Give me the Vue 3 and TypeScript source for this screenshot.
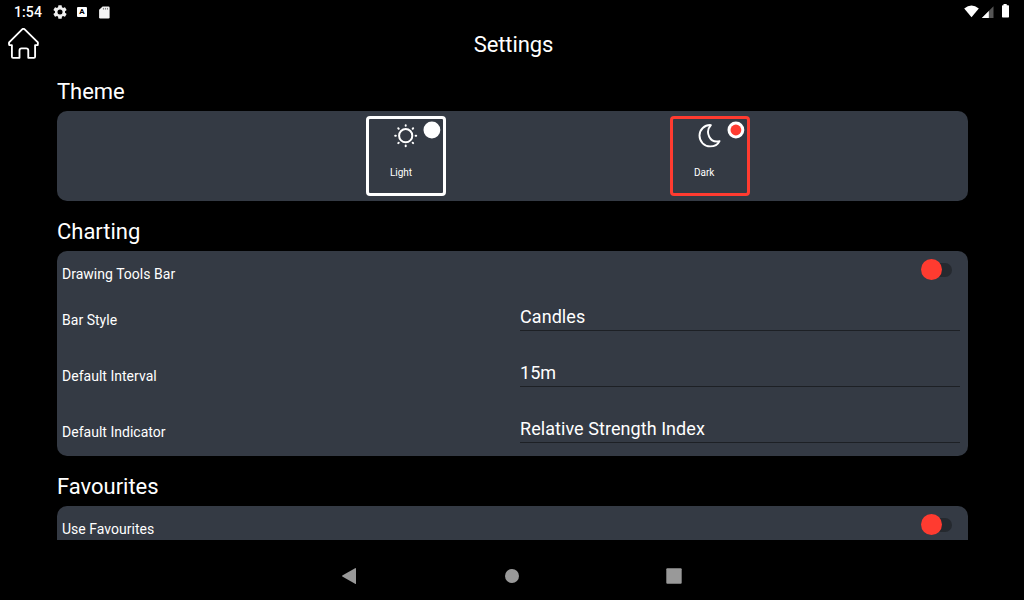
<script setup lang="ts">
import { ref } from 'vue'

type Theme = 'light' | 'dark'

interface Choice {
  label: string
  value: string
}

const theme = ref<Theme>('dark')
const drawingTools = ref(false)
const useFavourites = ref(false)

const themes: { id: Theme; label: string }[] = [
  { id: 'light', label: 'Light' },
  { id: 'dark', label: 'Dark' },
]

const choices: Choice[] = [
  { label: 'Bar Style', value: 'Candles' },
  { label: 'Default Interval', value: '15m' },
  { label: 'Default Indicator', value: 'Relative Strength Index' },
]

const rays = [0, 45, 90, 135, 180, 225, 270, 315]
</script>

<template>
  <div class="screen">
    <div class="status">
      <span class="clock">1:54</span>
      <svg class="gear" width="14" height="14" viewBox="2 2 20 20">
        <path fill="#eee" d="M19.14 12.94c.04-.3.06-.61.06-.94s-.02-.64-.07-.94l2.03-1.58a.49.49 0 0 0 .12-.61l-1.92-3.32a.49.49 0 0 0-.59-.22l-2.39.96a7 7 0 0 0-1.62-.94l-.36-2.54a.48.48 0 0 0-.48-.41h-3.84a.47.47 0 0 0-.47.41l-.36 2.54c-.59.24-1.13.57-1.62.94l-2.39-.96a.47.47 0 0 0-.59.22L2.74 8.87a.47.47 0 0 0 .12.61l2.03 1.58c-.05.3-.09.63-.09.94s.02.64.07.94l-2.03 1.58a.49.49 0 0 0-.12.61l1.92 3.32c.12.22.37.29.59.22l2.39-.96c.5.38 1.03.7 1.62.94l.36 2.54c.05.24.24.41.48.41h3.84c.24 0 .44-.17.47-.41l.36-2.54a7 7 0 0 0 1.62-.94l2.39.96c.22.08.47 0 .59-.22l1.92-3.32a.47.47 0 0 0-.12-.61zM12 15.6a3.6 3.6 0 1 1 0-7.2 3.6 3.6 0 0 1 0 7.2z" />
      </svg>
      <span class="badge">A</span>
      <svg class="card-icon" width="11" height="13" viewBox="0 0 11 13">
        <path fill="#f4f4f4" d="M3.6 .5H9.4Q10.600 .5 10.600 1.700V11.300Q10.600 12.500 9.400 12.500H1.300Q.1 12.500 .1 11.300V3.800z" />
        <path stroke="#777" stroke-width="1" d="M4.400 1.900v1.700M6.400 1.900v1.700M8.400 1.900v1.700" />
      </svg>
      <svg class="signals" width="48" height="16" viewBox="0 0 48 16">
        <path fill="#fff" d="M.2 4.400Q7.500-1.400 14.800 4.400L7.500 13.200z" />
        <path fill="#555" d="M17.800 14L29.500 2.300v11.700z" />
        <path fill="#fff" d="M17.800 14L24.800 7v7z" />
        <path fill="#fff" d="M39.500 0h3.200v1.200h1.600q.7 0 .7.700v10.900q0 .7-.7.700h-5.600q-.7 0-.7-.7V1.900q0-.7.7-.7h.8z" />
      </svg>
    </div>

    <header class="header">
      <svg class="home" width="31" height="31" viewBox="0 0 31.800 31.600" fill="none" stroke="#fff" stroke-width="1.900" stroke-linejoin="round">
        <path d="M14.500 1.300Q15.800.2 17.100 1.300L30.400 14.300Q31 15.400 30.400 17.500H27.800V29.300Q27.800 30.500 26.600 30.500H20.800V23Q20.800 20.800 18.600 20.800H14Q11.800 20.800 11.800 23V30.500H5.200Q4 30.500 4 29.300V17.500H1.400Q.6 15.600 1.400 14.400z" />
      </svg>
      <h1>Settings</h1>
    </header>

    <main class="content">
      <h2>Theme</h2>
      <section class="card themes">
        <button
          v-for="t in themes"
          :key="t.id"
          type="button"
          class="tile"
          :class="{ selected: theme === t.id }"
          @click="theme = t.id"
        >
          <svg v-if="t.id === 'light'" class="glyph" width="24" height="24" viewBox="-11.700 -11.700 24 24" fill="none" stroke="#fff" stroke-linecap="round">
            <circle r="6.600" stroke-width="2" />
            <path v-for="a in rays" :key="a" d="M0-9.900V-10.500" stroke-width="2" :transform="`rotate(${a})`" />
          </svg>
          <svg v-else class="glyph" width="24" height="24" viewBox="-11.600 -11.800 24 24" fill="none" stroke="#fff" stroke-width="1.900" stroke-linejoin="round">
            <path d="M1.300-10.700C-5.200-11.100-10.100-6.200-10.100-.2C-10.100 6-5.200 10.600.5 10.600C5 10.600 8.400 8.600 9.900 5.300C5.500 6.300 1.500 4.600-.4.900C-2.300-3-1.500-7.700 1.300-10.700z" />
          </svg>
          <span class="name">{{ t.label }}</span>
          <svg class="radio" width="18" height="18" viewBox="0 0 18 18">
            <circle cx="8.900" cy="9" r="8.400" fill="#fff" />
            <circle v-if="theme === t.id" cx="8.900" cy="9" r="5.400" fill="#ff3b30" />
          </svg>
        </button>
      </section>

      <h2>Charting</h2>
      <section class="card">
        <div class="row toggle-row">
          <span class="label">Drawing Tools Bar</span>
          <button type="button" class="switch" :class="{ on: drawingTools }" @click="drawingTools = !drawingTools"></button>
        </div>
        <div v-for="c in choices" :key="c.label" class="row choice-row">
          <span class="label">{{ c.label }}</span>
          <span class="value">{{ c.value }}</span>
        </div>
      </section>

      <h2>Favourites</h2>
      <section class="card">
        <div class="row toggle-row">
          <span class="label">Use Favourites</span>
          <button type="button" class="switch" :class="{ on: useFavourites }" @click="useFavourites = !useFavourites"></button>
        </div>
        <div class="row choice-row"></div>
      </section>
    </main>

    <nav class="nav">
      <svg width="16" height="16" viewBox="0 0 16 16"><path fill="#999" d="M14.500 0Q15 0 15 .6V15.400Q15 16 14.500 16L1.300 8.600Q.7 8 1.300 7.400z" /></svg>
      <svg width="16" height="16" viewBox="0 0 16 16"><circle cx="8" cy="8" r="7" fill="#999" /></svg>
      <svg width="16" height="16" viewBox="0 0 16 16"><rect x="-.7" y=".3" width="15.400" height="15.400" rx="1" fill="#999" /></svg>
    </nav>
  </div>
</template>

<style>
body {
  margin: 0;
  background: #000;
}
</style>

<style scoped>
.screen {
  width: 1024px;
  height: 600px;
  display: flex;
  flex-direction: column;
  overflow: hidden;
  background: #000;
  color: #fff;
  font-family: Roboto, "Liberation Sans", sans-serif;
}
button {
  padding: 0;
  border: 0;
  background: none;
  color: inherit;
  font: inherit;
}
.status {
  height: 24px;
  flex: none;
  display: flex;
  align-items: center;
  padding: 0 15px 0 14px;
}
.clock {
  font-size: 14px;
  font-weight: 500;
  line-height: 24px;
  letter-spacing: 0.1px;
}
.gear {
  margin-left: 11px;
}
.badge {
  width: 10px;
  height: 10px;
  margin-left: 10px;
  border-radius: 1px;
  background: #fff;
  color: #000;
  font-size: 8px;
  font-weight: 700;
  line-height: 10px;
  text-align: center;
}
.card-icon {
  margin-left: 12px;
}
.signals {
  margin: 0 -3px 0 auto;
}
.header {
  height: 42px;
  flex: none;
  display: grid;
  grid-template-columns: 40px 1fr 37px;
  align-items: center;
}
.home {
  margin: -3px 0 0 8px;
}
h1 {
  margin: 0;
  font-size: 22px;
  font-weight: 400;
  line-height: 42px;
  letter-spacing: -0.1px;
  text-align: center;
}
.content {
  flex: 1;
  min-height: 0;
  overflow: hidden;
  padding: 5px 56px 0 57px;
}
h2 {
  height: 39px;
  margin: 0;
  padding-top: 1px;
  font-size: 22px;
  font-weight: 400;
  line-height: 40px;
  letter-spacing: -0.02px;
}
.card {
  margin-bottom: 10px;
  border-radius: 10px;
  background: #343a44;
}
.themes {
  display: flex;
  gap: 224px;
  padding: 5px 0 5px 309px;
}
.tile {
  position: relative;
  box-sizing: border-box;
  width: 80px;
  height: 80px;
  display: flex;
  flex-direction: column;
  align-items: flex-start;
  border: 3px solid #fff;
  border-radius: 4px;
}
.glyph {
  margin: 5px 0 0 25px;
}
.name {
  margin: 18px 0 0 21px;
  font-size: 10px;
  line-height: 13px;
  letter-spacing: -0.02px;
}
.radio {
  position: absolute;
  top: 2px;
  right: 2px;
}
.selected {
  border-color: #ff3b30;
}
.row {
  display: grid;
  grid-template-columns: 458px 1fr;
  padding: 0 8px 0 5px;
}
.toggle-row {
  height: 37px;
}
.label {
  font-size: 14px;
  line-height: 18px;
  letter-spacing: 0.02px;
}
.toggle-row .label {
  margin-top: 14px;
}
.choice-row {
  height: 56px;
}
.choice-row .label {
  margin-top: 23px;
}
.value {
  height: 24px;
  margin-top: 18px;
  border-bottom: 1px solid #1d2025;
  font-size: 18px;
  line-height: 22px;
  letter-spacing: 0.06px;
}
.switch {
  position: relative;
  justify-self: end;
  width: 28px;
  height: 14px;
  margin: 12px 8px 0 0;
  border-radius: 7px;
  background: #25292f;
}
.switch::after {
  content: "";
  position: absolute;
  top: -4px;
  left: -3px;
  width: 21px;
  height: 21px;
  border-radius: 50%;
  background: #ff3b30;
}
.switch.on::after {
  left: 10px;
}
.nav {
  height: 60px;
  flex: none;
  display: flex;
  align-items: center;
  justify-content: center;
  gap: 147px;
  padding-top: 12px;
  box-sizing: border-box;
}
.nav svg {
  overflow: visible;
}
</style>
